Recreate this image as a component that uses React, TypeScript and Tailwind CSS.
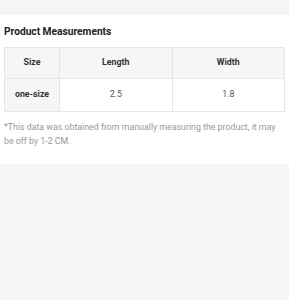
export default function App() {
  return (
    <div className="min-h-[300px] bg-[#f5f5f5]" style={{ fontFamily: "Roboto, 'Noto Sans', sans-serif" }}>
      <div className="h-[15px]" />
      <div className="bg-white px-[4px] pt-[8px] pb-[16px]">
        <div className="text-[10.2px] leading-[18px] font-bold text-[#222]">Product Measurements</div>
        <table className="mt-[6px] w-full border-collapse table-fixed text-[8.8px]">
          <colgroup>
            <col className="w-[55px]" />
            <col />
            <col />
          </colgroup>
          <thead>
            <tr className="bg-[#f6f6f6] h-[31px]">
              <th className="border border-[#e6e6e6] font-bold text-[#333] text-center">Size</th>
              <th className="border border-[#e6e6e6] font-bold text-[#333] text-center">Length</th>
              <th className="border border-[#e6e6e6] font-bold text-[#333] text-center">Width</th>
            </tr>
          </thead>
          <tbody>
            <tr className="h-[33px]">
              <td className="border border-[#e6e6e6] bg-[#f6f6f6] font-bold text-[#333] text-center">one-size</td>
              <td className="border border-[#e6e6e6] text-[#555] text-center">2.5</td>
              <td className="border border-[#e6e6e6] text-[#555] text-center">1.8</td>
            </tr>
          </tbody>
        </table>
        <p className="mt-[8px] text-[8.8px] leading-[14px] text-[#999]">
          *This data was obtained from manually measuring the product, it may be off by 1-2 CM.
        </p>
      </div>
    </div>
  );
}
